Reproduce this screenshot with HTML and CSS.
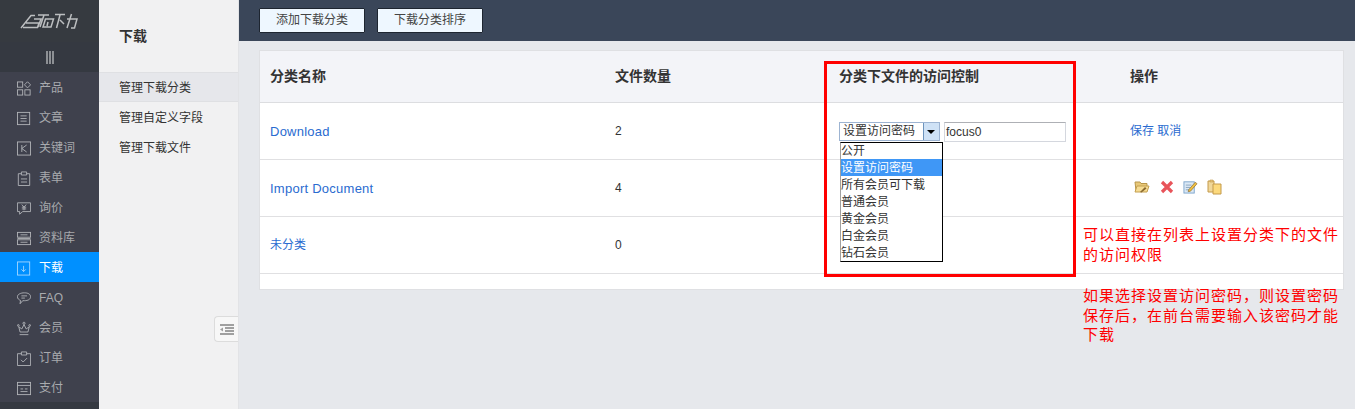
FILE: index.html
```html
<!DOCTYPE html>
<html lang="zh">
<head>
<meta charset="utf-8">
<title>下载</title>
<link rel="stylesheet" href="styles.css">
</head>
<body>
<div class="app">
  <aside class="rail">
    <div class="logo">
      <svg width="60" height="18" viewBox="0 0 60 18" fill="none" stroke="#bcbec0" stroke-width="1.5"><path d="M1 16 L11 3.500 H15 M6 11 H19 L17.500 15.500 H3 M18 3 H29 M14 7 H21 L18 15 M24 3 L20 15 M25.500 7 L23 15 H31 L33.500 7 Z M28 10 L27 14 M35 2.500 H45 M40 3 L36.500 16 M40 8 L44 12 M47 7 H57 L54.500 16 H51 M51.500 2 L47 16"/></svg>
    </div>
    <div class="toggle"><span></span><span></span><span></span></div>
    <nav class="nav">
      <a class="nav-item"><svg class="ico" viewBox="0 0 16 16"><rect x=".5" y=".5" width="6" height="6"/><path d="M12 .3 15.500 3.800 12 7.300 8.500 3.800Z"/><rect x=".5" y="9.500" width="6" height="6"/><rect x="9" y="9.500" width="6" height="6"/></svg><span>产品</span></a>
      <a class="nav-item"><svg class="ico" viewBox="0 0 16 16"><rect x=".5" y="1" width="14" height="14"/><path d="M4 5h7M4 8h7M4 11h7"/></svg><span>文章</span></a>
      <a class="nav-item"><svg class="ico" viewBox="0 0 16 16"><rect x=".5" y=".5" width="15" height="15"/><path d="M5.500 4v8M11 4 5.500 8l5.500 4"/></svg><span>关键词</span></a>
      <a class="nav-item"><svg class="ico" viewBox="0 0 16 16"><path d="M5 2.500H1.500V16h13V2.500H11M5 .5h6v3.500H5ZM4.500 8.500h7M4.500 12h7"/></svg><span>表单</span></a>
      <a class="nav-item"><svg class="ico" viewBox="0 0 16 16"><path d="M.5 1.500h15v10H6.500L3 14.500v-3H.5ZM5.500 3.500 8 6.500l2.500-3M8 6.500v3.500M5.500 6.500h5M5.500 8.500h5"/></svg><span>询价</span></a>
      <a class="nav-item"><svg class="ico" viewBox="0 0 16 16"><rect x=".5" y="1" width="15" height="5.500"/><rect x=".5" y="9.500" width="15" height="5.500"/><path d="M4 3.800h8M4 12.300h8M.5 8h15"/></svg><span>资料库</span></a>
      <a class="nav-item active"><svg class="ico" viewBox="0 0 16 16"><rect x=".5" y=".5" width="14" height="15"/><path d="M7.500 5v6.500M5 9l2.500 2.500L10 9"/></svg><span>下载</span></a>
      <a class="nav-item"><svg class="ico" viewBox="0 0 16 16"><path d="M8.500 1.500C12.500 1.500 15.500 3 15.500 6S12.500 10.500 8.500 10.500H6.500l-3 3.500.5-3.800C2 9.500.5 8 .5 6 .5 3 4.500 1.500 8.500 1.500ZM5 5h6.500M5 7.500h4"/></svg><span>FAQ</span></a>
      <a class="nav-item"><svg class="ico" viewBox="0 0 16 16"><circle cx="8" cy="2" r="1.200"/><circle cx="1.500" cy="4.500" r="1"/><circle cx="14.500" cy="4.500" r="1"/><path d="M2 6l1.500 6h9L14 6l-3.500 2.500L8 3.500 5.500 8.500ZM3 15h10"/></svg><span>会员</span></a>
      <a class="nav-item"><svg class="ico" viewBox="0 0 16 16"><path d="M5 2.500H.5V16h15V2.500H11M5 .5h6v3.500H5ZM4.500 9.500l2.500 2.500 4.500-4.500"/></svg><span>订单</span></a>
      <a class="nav-item"><svg class="ico" viewBox="0 0 16 16"><rect x=".5" y="1" width="15" height="14"/><path d="M.5 4.500h15M4 8.500h3M9 8.500h3M4 11.500h8"/></svg><span>支付</span></a>
    </nav>
  </aside>
  <aside class="sub">
    <h2 class="sub-title">下载</h2>
    <ul class="sub-list">
      <li class="sub-item current">管理下载分类</li>
      <li class="sub-item">管理自定义字段</li>
      <li class="sub-item">管理下载文件</li>
    </ul>
    <button class="collapse" type="button" aria-label="收起">
      <svg width="14" height="11" viewBox="0 0 14 11"><path d="M0 0h14v2H0ZM5 3h9v2H5ZM5 6h9v2H5ZM0 9h14v2H0ZM3 3.500v4L0 5.500Z" fill="#a0a0a0"/></svg>
    </button>
  </aside>
  <main class="main">
    <header class="toolbar">
      <button class="tool-btn" type="button">添加下载分类</button>
      <button class="tool-btn" type="button">下载分类排序</button>
    </header>
    <section class="content">
      <div class="panel">
        <table class="grid">
          <thead>
            <tr><th class="c1">分类名称</th><th class="c2">文件数量</th><th class="c3">分类下文件的访问控制</th><th class="c4">操作</th></tr>
          </thead>
          <tbody>
            <tr>
              <td><a class="link latin">Download</a></td><td>2</td>
              <td>
                <div class="access">
                  <div class="select"><span class="select-val">设置访问密码</span><span class="select-arrow"></span></div>
                  <div class="pwd">focus0</div>
                </div>
              </td>
              <td><a class="link">保存</a> <a class="link">取消</a></td>
            </tr>
            <tr>
              <td><a class="link latin">Import Document</a></td><td>4</td><td></td>
              <td>
                <div class="actions">
                  <svg width="17" height="15" viewBox="0 0 17 15"><path d="M1 3h5l1 1.500h6V12H2Z" fill="#e8c878" stroke="#b8964a"/><path d="M3 7h12l-2 6H1Z" fill="#f6dc94" stroke="#c4a050"/><path d="M6 13l5-5 1.500 1.500-5 4Z" fill="#8a6a30"/></svg>
                  <svg width="14" height="14" viewBox="0 0 14 14"><path d="M2 2l10 10M12 2 2 12" stroke="#e8545a" stroke-width="3.200"/></svg>
                  <svg width="15" height="15" viewBox="0 0 16 15"><rect x="1" y="2.500" width="11" height="12" fill="#dbe8f5" stroke="#7ea6cc"/><path d="M3 6h6M3 8.500h5M3 11h4" stroke="#8aa4bd"/><path d="M6 11 13 3l2 1.500-7 8-2.500.5Z" fill="#f0c040" stroke="#7a5a20" stroke-width=".6"/></svg>
                  <svg width="15" height="16" viewBox="0 0 15 16"><path d="M1 2h6v11H1Z" fill="#f0d79a" stroke="#c49a4a"/><path d="M3 1h3v2H3Z" fill="#e6c47c" stroke="#c49a4a" stroke-width=".6"/><path d="M6 5h8v10H6Z" fill="#fcd97c" stroke="#c49a4a"/></svg>
                </div>
              </td>
            </tr>
            <tr><td><a class="link">未分类</a></td><td>0</td><td></td><td></td></tr>
          </tbody>
        </table>
        <div class="panel-foot"></div>
      </div>
    </section>
  </main>
  <ul class="dropdown">
    <li>公开</li>
    <li class="hl">设置访问密码</li>
    <li>所有会员可下载</li>
    <li>普通会员</li>
    <li>黄金会员</li>
    <li>白金会员</li>
    <li>钻石会员</li>
  </ul>
  <div class="redbox"></div>
  <div class="note">
    <p>可以直接在列表上设置分类下的文件的访问权限</p>
    <p>如果选择设置访问密码，则设置密码保存后，在前台需要输入该密码才能下载</p>
  </div>
</div>
</body>
</html>
```
FILE: styles.css
```css
* { box-sizing: border-box; }
html, body { margin: 0; padding: 0; height: 100%; overflow: hidden; }
body { font: 12px/17px "Liberation Sans", "Noto Sans CJK SC", sans-serif; color: #333; }
ul { list-style: none; margin: 0; padding: 0; }
.app { position: relative; display: flex; width: 1355px; height: 409px; overflow: hidden; background: #e6e8ec; }

.rail { width: 99px; flex: none; background: #353941; display: flex; flex-direction: column; }
.logo { height: 42px; background: #363a40; display: flex; align-items: center; justify-content: center; padding-left: 1px; }
.toggle { height: 30px; background: #353941; display: flex; align-items: center; justify-content: center; gap: 1px; padding-top: 1px; }
.toggle span { width: 2px; height: 13px; background: #8d9094; }
.nav { display: flex; flex-direction: column; background: #3f414d; }
.nav-item { height: 30px; display: flex; align-items: center; gap: 8px; padding: 2px 0 0 17px; color: #a8aaae; font-size: 12px; }
.nav-item.active { background: #0090ff; color: #fff; }
.ico { width: 14px; height: 15px; fill: none; stroke: #b4b6ba; stroke-width: 1; flex: none; }
.active .ico { stroke: #a8d8ff; }

.sub { position: relative; width: 140px; flex: none; background: #f1f1f2; border-right: 1px solid #e2e3e6; }
.sub-title { margin: 0; height: 72px; padding: 28px 0 0 20px; font-size: 14px; line-height: 17px; font-weight: bold; color: #333; }
.sub-item { height: 30px; line-height: 32px; padding-left: 20px; color: #333; }
.sub-item.current { background: #e6e7eb; border-top: 1px solid #dfe0e3; border-bottom: 1px solid #dfe0e3; line-height: 30px; }
.collapse { position: absolute; right: 0; top: 316px; width: 24px; height: 26px; padding: 0; display: flex; align-items: center; justify-content: center; background: #f7f7f7; border: 1px solid #dcdcdc; border-right: 0; border-radius: 4px 0 0 4px; }

.main { flex: 1; min-width: 0; display: flex; flex-direction: column; }
.toolbar { height: 41px; background: #3a4659; display: flex; align-items: flex-start; gap: 12px; padding: 8px 0 0 20px; }
.tool-btn { width: 106px; height: 25px; padding: 0; background: #eef7ff; border: 1px solid #1d2530; border-radius: 1px; font: inherit; color: #444; }
.content { padding: 9px 11px 0 20px; }
.panel { background: #fff; border: 1px solid #dfe0e3; }
.grid { width: 100%; border-collapse: collapse; table-layout: fixed; }
.grid th { height: 51px; background: #f3f4f8; font-size: 14px; font-weight: bold; text-align: left; padding: 0 0 0 10px; color: #333; border-bottom: 1px solid #dcdde0; }
.grid th.c3 { padding-left: 9px; }
.grid td { height: 57px; padding: 2px 0 0 10px; color: #333; border-bottom: 1px solid #e0e0e2; }
.c1 { width: 345px; }
.c2 { width: 225px; }
.c3 { width: 290px; }
.link { color: #2a6bd0; }
.latin { font-size: 13px; letter-spacing: .25px; }
.panel-foot { height: 15px; }
.access { display: flex; gap: 4px; align-items: center; margin-left: -1px; }
.select { width: 101px; height: 19px; display: flex; border: 1px solid #9db4d2; background: #fff; }
.select-val { flex: 1; line-height: 17px; padding-left: 3px; color: #333; }
.select-arrow { width: 16px; background: #cfe2f6; border-left: 1px solid #6d94bd; position: relative; }
.select-arrow::after { content: ""; position: absolute; left: 3px; top: 7px; border: 4px solid transparent; border-top-color: #000; border-bottom: 0; }
.pwd { width: 122px; height: 20px; border: 1px solid #d4d7de; border-top-color: #aeb0b5; line-height: 18px; padding-left: 1px; }
.actions { display: flex; gap: 9px; align-items: center; padding-left: 4px; margin-top: -4px; }

.dropdown { position: absolute; left: 840px; top: 142px; width: 103px; height: 120px; background: #fff; border: 1px solid #000; border-left-color: #a0a0a0; }
.dropdown li { height: 17px; line-height: 18px; color: #333; }
.dropdown li:first-child { height: 16px; line-height: 17px; }
.dropdown li.hl { background: #3f97f6; color: #fff; }
.redbox { position: absolute; left: 824px; top: 61px; width: 252px; height: 216px; border: 3px solid #f00; pointer-events: none; }
.note { position: absolute; left: 1083px; top: 225px; width: 258px; color: #f00; font-size: 15px; letter-spacing: 1px; line-height: 19.500px; }
.note p { margin: 0 0 22px; }
```
